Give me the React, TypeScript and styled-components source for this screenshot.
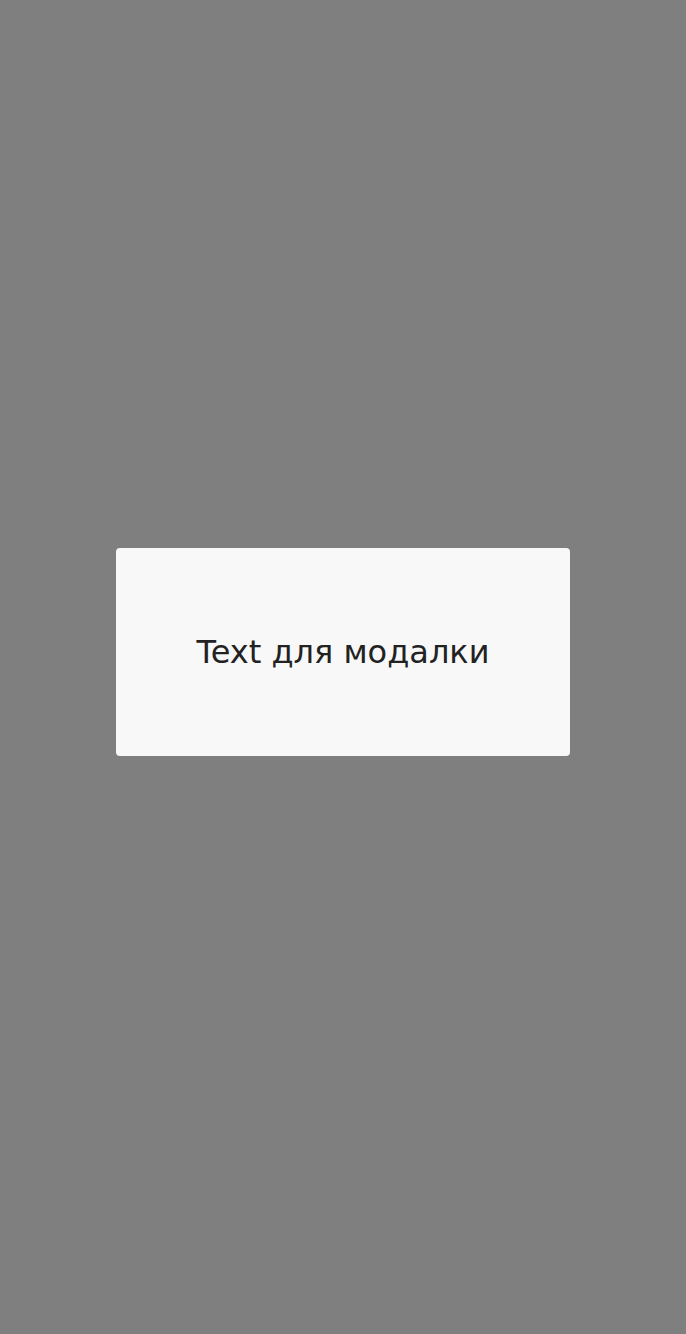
import React from 'react';
import styled, { createGlobalStyle } from 'styled-components';

const GlobalStyle = createGlobalStyle`
    html, body {
        margin: 0;
        padding: 0;
        background: #ffffff;
    }
    #root {
        min-height: 100vh;
    }
`;

const Overlay = styled.div`
    position: fixed;
    inset: 0;
    background: rgba(0, 0, 0, 0.5);
    display: flex;
    align-items: center;
    justify-content: center;
    padding-bottom: 30px;
    box-sizing: border-box;
`;

const ModalBox = styled.div`
    width: 454px;
    height: 208px;
    background: #f8f8f8;
    border-radius: 4px;
    display: flex;
    align-items: center;
    justify-content: center;
`;

const ModalText = styled.p`
    margin: 0;
    font-family: 'DejaVu Sans', sans-serif;
    font-size: 32px;
    color: #222222;
`;

const App = () => (
    <>
        <GlobalStyle />
        <Overlay>
            <ModalBox>
                <ModalText>Text для модалки</ModalText>
            </ModalBox>
        </Overlay>
    </>
);

export default App;
